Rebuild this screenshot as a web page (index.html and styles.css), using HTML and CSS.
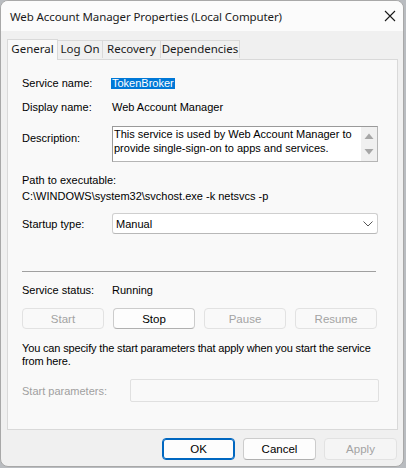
FILE: index.html
```html
<!DOCTYPE html>
<html>
<head>
<meta charset="utf-8">
<link rel="stylesheet" href="styles.css">
</head>
<body>
<div class="window">
  <div class="titlebar">
    <span class="title">Web Account Manager Properties (Local Computer)</span>
    <svg class="close" width="12" height="12" viewBox="0 0 12 12"><path d="M1 1 L11 11 M11 1 L1 11" stroke="#1a1a1a" stroke-width="1.1" fill="none"/></svg>
  </div>
  <div class="body">
    <div class="tabs">
      <div class="tab active">General</div>
      <div class="tab">Log On</div>
      <div class="tab">Recovery</div>
      <div class="tab">Dependencies</div>
    </div>
    <div class="panel">
      <div class="row r1"><span class="label">Service name:</span><span class="sel">TokenBroker</span></div>
      <div class="row r2"><span class="label">Display name:</span><span>Web Account Manager</span></div>
      <div class="row r3">
        <span class="label lpad">Description:</span>
        <div class="desc">
          <div class="desc-text">This service is used by Web Account Manager to provide single-sign-on to apps and services.</div>
          <div class="scroll">
            <svg width="16" height="34" viewBox="0 0 16 34"><path d="M3.5 12 L8 6.5 L12.5 12 Z" fill="#a6a6a6"/><path d="M3.5 22 L8 27.5 L12.5 22 Z" fill="#a6a6a6"/></svg>
          </div>
        </div>
      </div>
      <div class="path">
        <div class="line">Path to executable:</div>
        <div class="line">C:\WINDOWS\system32\svchost.exe -k netsvcs -p</div>
      </div>
      <div class="row r5">
        <span class="label">Startup type:</span>
        <div class="combo"><span>Manual</span>
          <svg width="10" height="6" viewBox="0 0 10 6"><path d="M0.5 0.5 L5 5 L9.5 0.5" stroke="#555" stroke-width="1" fill="none"/></svg>
        </div>
      </div>
      <div class="sep"></div>
      <div class="row r6"><span class="label">Service status:</span><span>Running</span></div>
      <div class="btns">
        <div class="btn dis">Start</div>
        <div class="btn">Stop</div>
        <div class="btn dis">Pause</div>
        <div class="btn dis">Resume</div>
      </div>
      <div class="info">You can specify the start parameters that apply when you start the service from here.</div>
      <div class="row r8">
        <span class="label grey wide">Start parameters:</span>
        <div class="input"></div>
      </div>
    </div>
    <div class="footer">
      <div class="fbtn ok">OK</div>
      <div class="fbtn">Cancel</div>
      <div class="fbtn dis">Apply</div>
    </div>
  </div>
</div>
</body>
</html>
```

FILE: styles.css
```css
* { box-sizing: border-box; }
html, body { margin: 0; padding: 0; }
body {
  width: 406px;
  height: 468px;
  background: #b9bcc0;
  font-family: "Liberation Sans", Arial, sans-serif;
  font-size: 11px;
  color: #000;
  overflow: hidden;
}
.window {
  width: 404px;
  height: 467px;
  background: #f0f0f0;
  border: 1px solid #a8a8a8;
  border-radius: 8px;
  overflow: hidden;
  display: flex;
  flex-direction: column;
}
.titlebar {
  height: 30px;
  background: #fbfbfb;
  display: flex;
  align-items: center;
  justify-content: space-between;
  padding: 0 7px 0 9px;
  flex: none;
}
.title {
  font-family: "Noto Sans", sans-serif;
  font-size: 11.5px;
  letter-spacing: -0.1px;
  color: #1b1b1b;
}
.body {
  flex: 1;
  padding: 8px 6px 0 6px;
  display: flex;
  flex-direction: column;
}
.tabs {
  display: flex;
  align-items: flex-end;
  height: 20px;
  position: relative;
  z-index: 1;
}
.tab {
  font-family: "Noto Sans", sans-serif;
  font-size: 11.5px;
  white-space: nowrap;
  height: 18px;
  line-height: 16px;
  padding: 0;
  text-align: center;
  border: 1px solid #d9d9d9;
  border-bottom: none;
  border-left: none;
  background: #f0f0f0;
  color: #1a1a1a;
  margin-bottom: 1px;
}
.tab.active {
  width: 51px;
  height: 21px;
  margin-bottom: -1px;
  background: #f9f9f9;
  border-left: 1px solid #d9d9d9;
  padding-top: 1px;
}
.tab:nth-child(2) { width: 45px; }
.tab:nth-child(3) { width: 58px; }
.tab:nth-child(4) { width: 79px; }
.panel {
  width: 391px;
  height: 371px;
  background: #f9f9f9;
  border: 1px solid #d9d9d9;
  padding: 15px 18px 0 14px;
  display: flex;
  flex-direction: column;
}
.row {
  display: flex;
  align-items: center;
  line-height: 16px;
}
.label { width: 90px; flex: none; color: #000; }
.label.wide { width: 108px; }
.grey { color: #a0a0a0; }
.sel {
  background: #0078d7;
  color: #fff;
  padding: 0 1px;
  margin-left: -1px;
  height: 11px;
  display: inline-block;
  line-height: 11px;
}
.r2 { margin-top: 8px; }
.r3 { margin-top: 11px; align-items: flex-start; }
.lpad { padding-top: 4px; }
.desc {
  width: 266px;
  height: 36px;
  background: #fff;
  border: 1px solid #b5b5b5;
  border-top-color: #9a9a9a;
  border-left-color: #9a9a9a;
  display: flex;
}
.desc-text {
  flex: 1;
  line-height: 14px;
  padding: 0 0 0 1px;
}
.scroll {
  width: 16px;
  background: #f0f0f0;
  flex: none;
}
.scroll svg { display: block; }
.path { margin-top: 10px; line-height: 16px; }
.r5 { margin-top: 9px; }
.combo {
  width: 266px;
  height: 21px;
  background: #fff;
  border: 1px solid #cfcfcf;
  border-bottom-color: #b8b8b8;
  border-radius: 3px;
  display: flex;
  align-items: center;
  justify-content: space-between;
  padding: 0 4px 0 3px;
}
.sep {
  margin-top: 37px;
  height: 1px;
  background: #a0a0a0;
  margin-right: 3px;
}
.r6 { margin-top: 10px; }
.btns {
  margin-top: 10px;
  display: flex;
  gap: 9px;
}
.btn, .fbtn {
  width: 82px;
  height: 21px;
  border: 1px solid #cccccc;
  border-bottom-color: #b0b0b0;
  border-radius: 4px;
  background: #fdfdfd;
  font-size: 11.5px;
  display: flex;
  align-items: center;
  justify-content: center;
  color: #000;
}
.btn.dis, .fbtn.dis {
  color: #a3a3a3;
  border-color: #e2e2e2;
  background: #f9f9f9;
}
.info {
  margin-top: 13px;
  line-height: 13px;
  letter-spacing: -0.15px;
}
.r8 { margin-top: 11px; }
.input {
  width: 249px;
  height: 23px;
  border: 1px solid #e0e0e0;
  border-radius: 2px;
  background: #f9f9f9;
}
.footer {
  display: flex;
  justify-content: flex-end;
  gap: 8px;
  margin-top: 8px;
}
.fbtn { width: 73px; height: 22px; }
.fbtn.dis { background: #f5f5f5; }
.fbtn.ok {
  border: 1px solid #0067c0;
  box-shadow: inset 0 0 0 1px #0067c0;
  background: #fdfdfd;
}
```
